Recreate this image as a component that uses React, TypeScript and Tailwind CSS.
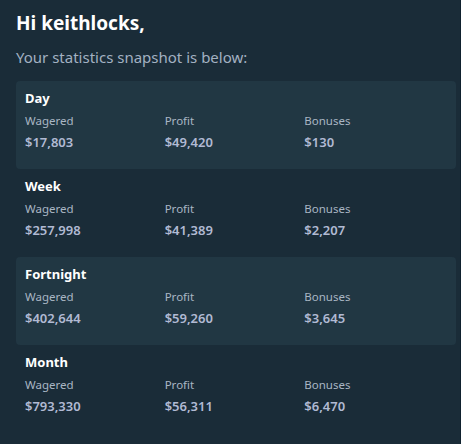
import React from "react";

const rows = [
  { name: "Day", w: "$17,803", p: "$49,420", b: "$130", shaded: true },
  { name: "Week", w: "$257,998", p: "$41,389", b: "$2,207", shaded: false },
  { name: "Fortnight", w: "$402,644", p: "$59,260", b: "$3,645", shaded: true },
  { name: "Month", w: "$793,330", p: "$56,311", b: "$6,470", shaded: false },
];

export default function App() {
  return (
    <div
      className="w-[461px] h-[444px] bg-[#1a2c38] border-r border-[#0f212e] pl-4 pr-[4px] pt-[9px] overflow-hidden"
      style={{ fontFamily: '"Noto Sans", "Open Sans", sans-serif' }}
    >
      <h1 className="text-[19px] font-bold text-white leading-[28px]">Hi keithlocks,</h1>
      <p className="text-[15px] text-[#a3b1c2] leading-[24px] mt-[8px]">Your statistics snapshot is below:</p>
      <div className="mt-[12px] flex flex-col">
        {rows.map((r) => (
          <div
            key={r.name}
            className={`h-[88px] rounded-[4px] pl-[9px] pr-[12px] pt-[7px] ${r.shaded ? "bg-[#213743]" : ""}`}
          >
            <div className="text-[13px] font-bold text-white leading-[20px]">{r.name}</div>
            <div className="grid grid-cols-3 mt-[4px]">
              {[
                ["Wagered", r.w],
                ["Profit", r.p],
                ["Bonuses", r.b],
              ].map(([l, v]) => (
                <div key={l} className="flex flex-col">
                  <span className="text-[11.5px] text-[#a9b6c4] leading-[18px]">{l}</span>
                  <span className="text-[13px] font-semibold text-[#b1bad3] leading-[20px] mt-[2px]">{v}</span>
                </div>
              ))}
            </div>
          </div>
        ))}
      </div>
    </div>
  );
}
